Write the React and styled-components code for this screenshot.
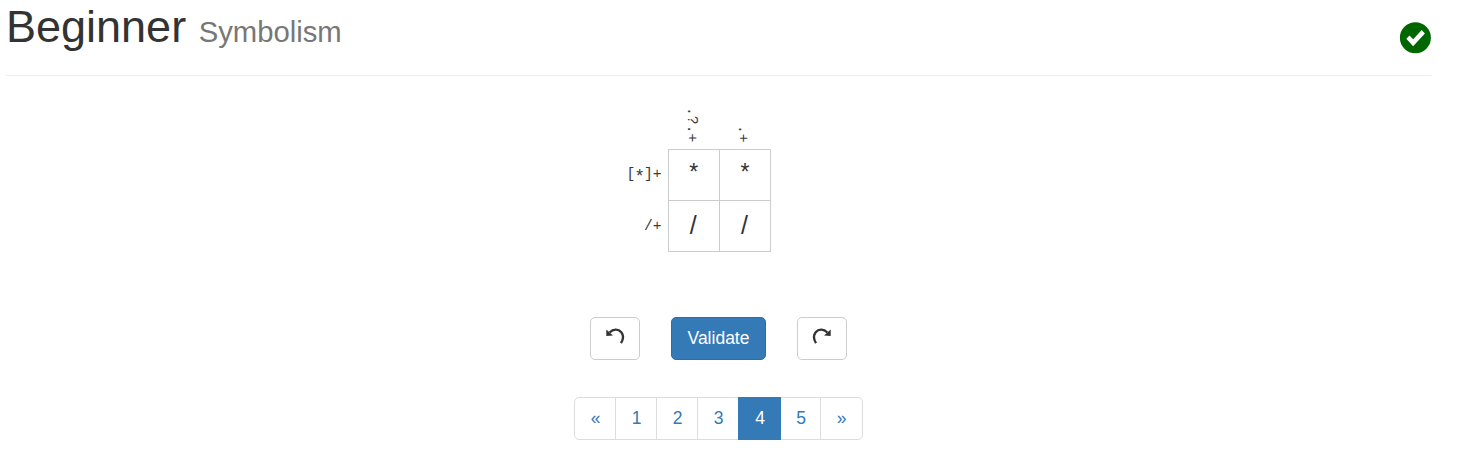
import React from "react";
import styled, { createGlobalStyle } from "styled-components";

const GlobalStyle = createGlobalStyle`
  *, *::before, *::after { box-sizing: border-box; }
  body {
    margin: 0;
    background: #fff;
    color: #333;
    font: 17.5px/25px "Liberation Sans", Arial, sans-serif;
    overflow: hidden;
  }
`;

const Page = styled.main`
  width: 1425px;
  height: 459px;
  margin-left: 6px;
  display: flex;
  flex-direction: column;
`;

const Header = styled.header`
  height: 76px;
  flex: none;
  display: flex;
  justify-content: space-between;
  align-items: flex-start;
  border-bottom: 1px solid #eee;
`;

const Title = styled.h1`
  margin: 2px 0 0;
  font-size: 45px;
  font-weight: 400;
  line-height: 50px;
  white-space: pre;
`;

const Subtitle = styled.small`
  font-size: 29.25px;
  line-height: 1;
  color: #777;
`;

const Solved = styled.svg`
  display: block;
  width: 32px;
  height: 32px;
  margin-top: 22px;
`;

const Board = styled.table`
  margin: 24px 0 0 612px;
  align-self: flex-start;
  border-collapse: collapse;
  table-layout: fixed;
  width: 153px;
`;

const Clue = styled.th`
  padding: 0;
  font: 400 14.7px/20px "Liberation Mono", monospace;
  color: #3a3a3a;
  white-space: pre;
`;

const ColumnClue = styled(Clue)`
  height: 49px;
  width: 51px;
  padding: 0 0 6px 14px;
  vertical-align: bottom;

  span {
    display: block;
    writing-mode: vertical-rl;
    text-align: end;
    height: 42px;
  }
`;

const RowClue = styled(Clue)`
  width: 50px;
  padding-right: 6px;
  text-align: right;
`;

const ClueStar = styled.span`
  display: inline-block;
  width: 8.8px;
  font-size: 18px;
  line-height: 16px;
  text-indent: -1px;
  vertical-align: -4px;
`;

const Cell = styled.td`
  width: 51px;
  height: 51px;
  padding: 0 1px 2px 0;
  border: 1px solid #ccc;
  font-size: 25px;
  line-height: 36px;
  text-align: center;
`;

const StarCell = styled(Cell)`
  padding: 0 0 6px;
  font-size: 23px;
`;

const Actions = styled.div`
  display: flex;
  gap: 31px;
  margin: 65px 0 0 584px;
`;

const Button = styled.button`
  width: ${(p) => (p.$primary ? 95 : 50)}px;
  height: 43px;
  padding: 0;
  display: flex;
  align-items: center;
  justify-content: center;
  font: inherit;
  color: ${(p) => (p.$primary ? "#fff" : "#333")};
  background: ${(p) => (p.$primary ? "#337ab7" : "#fff")};
  border: 1px solid ${(p) => (p.$primary ? "#2e6da4" : "#ccc")};
  border-radius: 5px;
`;

const TurnIcon = styled.svg`
  width: 20px;
  height: 18px;
  margin-bottom: 2px;
  transform: ${(p) => (p.$flip ? "scaleX(-1)" : "none")};
`;

const Pagination = styled.nav`
  display: flex;
  margin: 37px 0 0 568px;
`;

const PageLink = styled.a`
  width: ${(p) => p.$width}px;
  height: 43px;
  margin-right: -1px;
  padding-left: 1px;
  display: flex;
  align-items: center;
  justify-content: center;
  position: relative;
  z-index: ${(p) => (p.$active ? 1 : 0)};
  color: ${(p) => (p.$active ? "#fff" : "#337ab7")};
  background: ${(p) => (p.$active ? "#337ab7" : "#fff")};
  border: 1px solid ${(p) => (p.$active ? "#337ab7" : "#ddd")};

  &:first-child { border-radius: 5px 0 0 5px; }
  &:last-child { border-radius: 0 5px 5px 0; margin-right: 0; padding-left: 0; }
`;

const columnClues = [".?.+", ".+"];
const rows = [
  { clue: "[*]+", cells: ["*", "*"] },
  { clue: "/+", cells: ["/", "/"] },
];
const pages = [
  ["«", 42], ["1", 42], ["2", 42], ["3", 42], ["4", 43], ["5", 41], ["»", 43],
];

function Turn({ flip }) {
  return (
    <TurnIcon $flip={flip} viewBox="0 0 20 18">
      <path d="M4.600 4.500C8.100 1 13.300 .6 16.300 4.300c2.500 3.100 2.100 7-.3 10.800" fill="none" stroke="#333" strokeWidth="2.300" />
      <path d="M1.300 1.500v6.500l6.700-.6z" fill="#333" />
    </TurnIcon>
  );
}

export default function App() {
  return (
    <Page>
      <GlobalStyle />
      <Header>
        <Title>Beginner <Subtitle>Symbolism</Subtitle></Title>
        <Solved viewBox="0 0 32 32">
          <circle cx="16.400" cy="15.800" r="15.500" fill="#060" />
          <path d="M7.300 16.800l3.200-3.200 3.700 3.600 8.500-9.300 3.200 3.500-11.800 12.800z" fill="#fff" />
        </Solved>
      </Header>
      <Board>
        <tbody>
          <tr>
            <RowClue as="td" />
            {columnClues.map((clue) => (
              <ColumnClue key={clue}><span>{clue}</span></ColumnClue>
            ))}
          </tr>
          {rows.map((row) => (
            <tr key={row.clue}>
              <RowClue>
                {[...row.clue].map((c, i) => (c === "*" ? <ClueStar key={i}>{c}</ClueStar> : c))}
              </RowClue>
              {row.cells.map((value, i) =>
                value === "*" ? <StarCell key={i}>{value}</StarCell> : <Cell key={i}>{value}</Cell>
              )}
            </tr>
          ))}
        </tbody>
      </Board>
      <Actions>
        <Button aria-label="Undo"><Turn /></Button>
        <Button $primary>Validate</Button>
        <Button aria-label="Redo"><Turn flip /></Button>
      </Actions>
      <Pagination>
        {pages.map(([label, width]) => (
          <PageLink key={label} $width={width} $active={label === "4"}>{label}</PageLink>
        ))}
      </Pagination>
    </Page>
  );
}
